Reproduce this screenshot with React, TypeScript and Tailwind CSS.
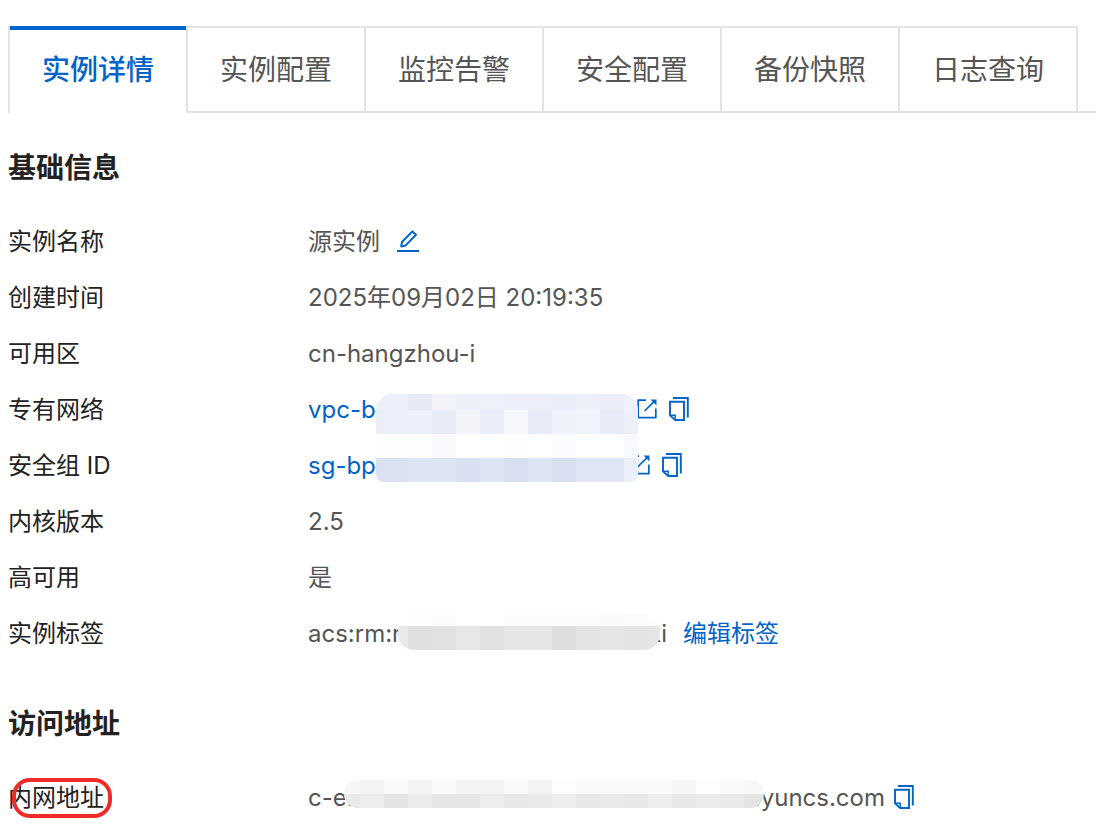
import React, { useState } from 'react';

const tabs = ['实例详情', '实例配置', '监控告警', '安全配置', '备份快照', '日志查询'];

interface MosaicProps {
  className: string;
  xs: number[];
  ys: number[];
  colors: string[][];
}

// pixelated block that hides sensitive ids
const Mosaic: React.FC<MosaicProps> = ({ className, xs, ys, colors }) => {
  const width = xs[xs.length - 1];
  const height = ys[ys.length - 1];
  return (
    <div className={`absolute overflow-hidden pointer-events-none ${className}`} aria-hidden="true">
      <svg className="block" width={width} height={height} shapeRendering="crispEdges">
        {colors.map((row, r) =>
          row.map((fill, c) => (
            <rect key={`${r}-${c}`} x={xs[c]} y={ys[r]} width={xs[c + 1] - xs[c]} height={ys[r + 1] - ys[r]} fill={fill} />
          ))
        )}
      </svg>
    </div>
  );
};

const networkXs = [0, 8, 32, 56, 80, 104, 128, 152, 176, 200, 224, 248, 262];
const networkYs = [0, 16, 40, 64, 88];
const networkColors = [
  ['#edf0fa', '#edf0fa', '#e7eaf6', '#f3f4fa', '#edf0f8', '#eef1fa', '#eceff9', '#eceff9', '#e9edf7', '#edf0f9', '#ebeef8', '#eff2fb'],
  ['#eaeef7', '#edf0fa', '#edf0fa', '#e7ebf6', '#f3f4fa', '#ebeefa', '#f6f7fb', '#e7eaf7', '#eff2fb', '#f0f3fc', '#e7ebf7', '#edf0fa'],
  ['#fefefe', '#fdfdfe', '#fdfdfe', '#f8faff', '#ffffff', '#ffffff', '#fcfdfe', '#ffffff', '#fafbfe', '#ffffff', '#ffffff', '#f8faff'],
  ['#dce1f2', '#dce1f2', '#dee4f2', '#dee4f2', '#dae0f1', '#dfe4f2', '#d9def1', '#dee4f2', '#d9def1', '#dfe5f3', '#dfe5f3', '#ebeffa'],
];

const tagXs = [0, 10, 34, 58, 82, 106, 130, 154, 178, 202, 226, 250, 262];
const tagYs = [0, 12, 36];
const tagColors = [
  ['#ffffff', '#fdfdfd', '#fcfcfc', '#ffffff', '#ffffff', '#fcfcfc', '#fcfcfc', '#fcfcfc', '#fcfcfc', '#fafafa', '#fbfbfb', '#fdfdfd'],
  ['#e9e9e9', '#e0e0e0', '#e1e1e1', '#e7e7e7', '#e1e1e1', '#e6e6e6', '#e6e6e6', '#dedede', '#e4e4e4', '#e6e6e6', '#e4e4e4', '#e6e6e6'],
];

const addressXs = [0, 16, 40, 64, 88, 112, 136, 160, 184, 208, 232, 256, 280, 304, 328, 352, 376, 400, 420];
const addressYs = [0, 14, 28];
const addressColors = [
  ['#f6f6f6', '#f4f4f4', '#f9f9f9', '#f4f4f4', '#f9f9f9', '#f3f3f3', '#f4f4f4', '#f9f9f9', '#f3f3f3', '#fdfdfd', '#f9f9f9', '#fafafa', '#f9f9f9', '#fafafa', '#f6f6f6', '#fdfdfd', '#fafafa', '#f7f7f7'],
  ['#e9e9e9', '#eeeeee', '#e4e4e4', '#ebebeb', '#e5e5e5', '#e5e5e5', '#eeeeee', '#e8e8e8', '#eaeaea', '#ededed', '#e8e8e8', '#eaeaea', '#e8e8e8', '#ededed', '#e8e8e8', '#ebebeb', '#e9e9e9', '#e4e4e4'],
];

const EditIcon = () => (
  <svg width="22" height="24" viewBox="0 0 22 24" fill="none" stroke="currentColor" strokeWidth="2">
    <path d="M4.2 17.4l.8-4.4L15.4 2.4l3.6 3.4L8.6 16.4z" strokeLinejoin="round" />
    <path d="M0 22h22" />
  </svg>
);

const ExternalIcon = () => (
  <svg width="20" height="20" viewBox="0 0 20 20" fill="none" stroke="currentColor" strokeWidth="1.7">
    <path d="M9 1.2H1.2v17.4h17.6v-9" />
    <path d="M7.6 12L17 2.6" />
    <path d="M13.5.5h6v6z" fill="currentColor" stroke="none" />
  </svg>
);

const CopyIcon = () => (
  <svg width="20" height="24" viewBox="0 0 20 24" fill="none" stroke="currentColor" strokeWidth="1.9">
    <path d="M4 1h14.8v19.6" />
    <path d="M1 4.8h14V23H6.2L1 18.4z" />
    <path d="M1 18.2h5.2V23" strokeWidth="1.4" />
  </svg>
);

const CopyButton: React.FC<{ text: string }> = ({ text }) => (
  <button type="button" title="复制" className="pb-0.5 text-[#0064c8] cursor-pointer" onClick={() => navigator.clipboard?.writeText(text)}>
    <CopyIcon />
  </button>
);

const IdLink: React.FC<{ href: string; className: string; children: React.ReactNode }> = ({ href, className, children }) => (
  <a href={href} className={`mr-3 flex items-center justify-between text-[#0064c8] ${className}`}>
    {children}
    <span className="pb-0.5">
      <ExternalIcon />
    </span>
  </a>
);

const Row: React.FC<{ label: React.ReactNode; children: React.ReactNode }> = ({ label, children }) => (
  <div className="flex h-14 items-center">
    <dt className="w-[300px] shrink-0 text-[#222]">{label}</dt>
    <dd className="relative flex h-14 items-center text-[#555] whitespace-nowrap">{children}</dd>
  </div>
);

const App: React.FC = () => {
  const [active, setActive] = useState(0);

  return (
    <main className="min-h-screen bg-white pt-[26px] font-['Inter','Noto_Sans_CJK_SC',sans-serif] text-2xl" lang="zh-CN">
      <div className="flex pl-2 text-[28px]" role="tablist">
        {tabs.map((tab, i) => (
          <button
            key={tab}
            type="button"
            role="tab"
            aria-selected={i === active}
            onClick={() => setActive(i)}
            className={`relative h-[87px] shrink-0 border-l-2 px-8 pt-0.5 border-[#e1e1e8] cursor-pointer last-of-type:border-r-2 ${
              i === active ? 'font-medium text-[#0064c8]' : 'border-y-2 text-[#555]'
            }`}
          >
            {i === active && <span className="absolute inset-x-0 top-0 h-1 bg-[#0064c8]" />}
            {tab}
          </button>
        ))}
        <div className="flex-1 border-b-2 border-[#e1e1e8]" />
      </div>

      <section className="px-2 pt-[35px]">
        <h2 className="text-[28px] leading-10 font-bold text-[#222]">基础信息</h2>
        <dl className="pt-[26px]">
          <Row label="实例名称">
            源实例
            <button type="button" title="编辑" className="ml-[17px] pb-0.5 text-[#0064c8] cursor-pointer">
              <EditIcon />
            </button>
          </Row>
          <Row label="创建时间">2025年09月02日 20:19:35</Row>
          <Row label="可用区">cn-hangzhou-i</Row>
          <Row label="专有网络">
            <IdLink href="#vpc" className="w-[349px]">vpc-b</IdLink>
            <CopyButton text="vpc-b" />
          </Row>
          <Row label="安全组 ID">
            <IdLink href="#sg" className="w-[342px]">sg-bp</IdLink>
            <CopyButton text="sg-bp" />
            <Mosaic className="-top-11 left-[68px] rounded-t-2xl rounded-b-lg" xs={networkXs} ys={networkYs} colors={networkColors} />
          </Row>
          <Row label="内核版本">2.5</Row>
          <Row label="高可用">是</Row>
          <Row label="实例标签">
            <span className="mr-4 flex w-[359px] justify-between">
              <span>acs:rm:r</span>
              <span>ki</span>
            </span>
            <Mosaic className="top-2 left-[90px] rounded-2xl" xs={tagXs} ys={tagYs} colors={tagColors} />
            <a href="#tags" className="text-[#0064c8]">编辑标签</a>
          </Row>
        </dl>
      </section>

      <section className="px-2 pt-[42px]">
        <h2 className="text-[28px] leading-10 font-bold text-[#222]">访问地址</h2>
        <dl className="pt-[26px]">
          <Row
            label={
              <span className="relative inline-block">
                内网地址
                <span className="absolute top-1/2 left-1 h-10 w-[100px] -translate-y-1/2 rounded-[18px] border-4 border-[#ef2b28]" />
              </span>
            }
          >
            <span className="mr-[9px] flex w-[577px] justify-between">
              <span>c-e.</span>
              <span>.yuncs.com</span>
            </span>
            <Mosaic className="top-2.5 left-9 rounded-[14px]" xs={addressXs} ys={addressYs} colors={addressColors} />
            <CopyButton text="yuncs.com" />
          </Row>
        </dl>
      </section>
    </main>
  );
};

export default App;
